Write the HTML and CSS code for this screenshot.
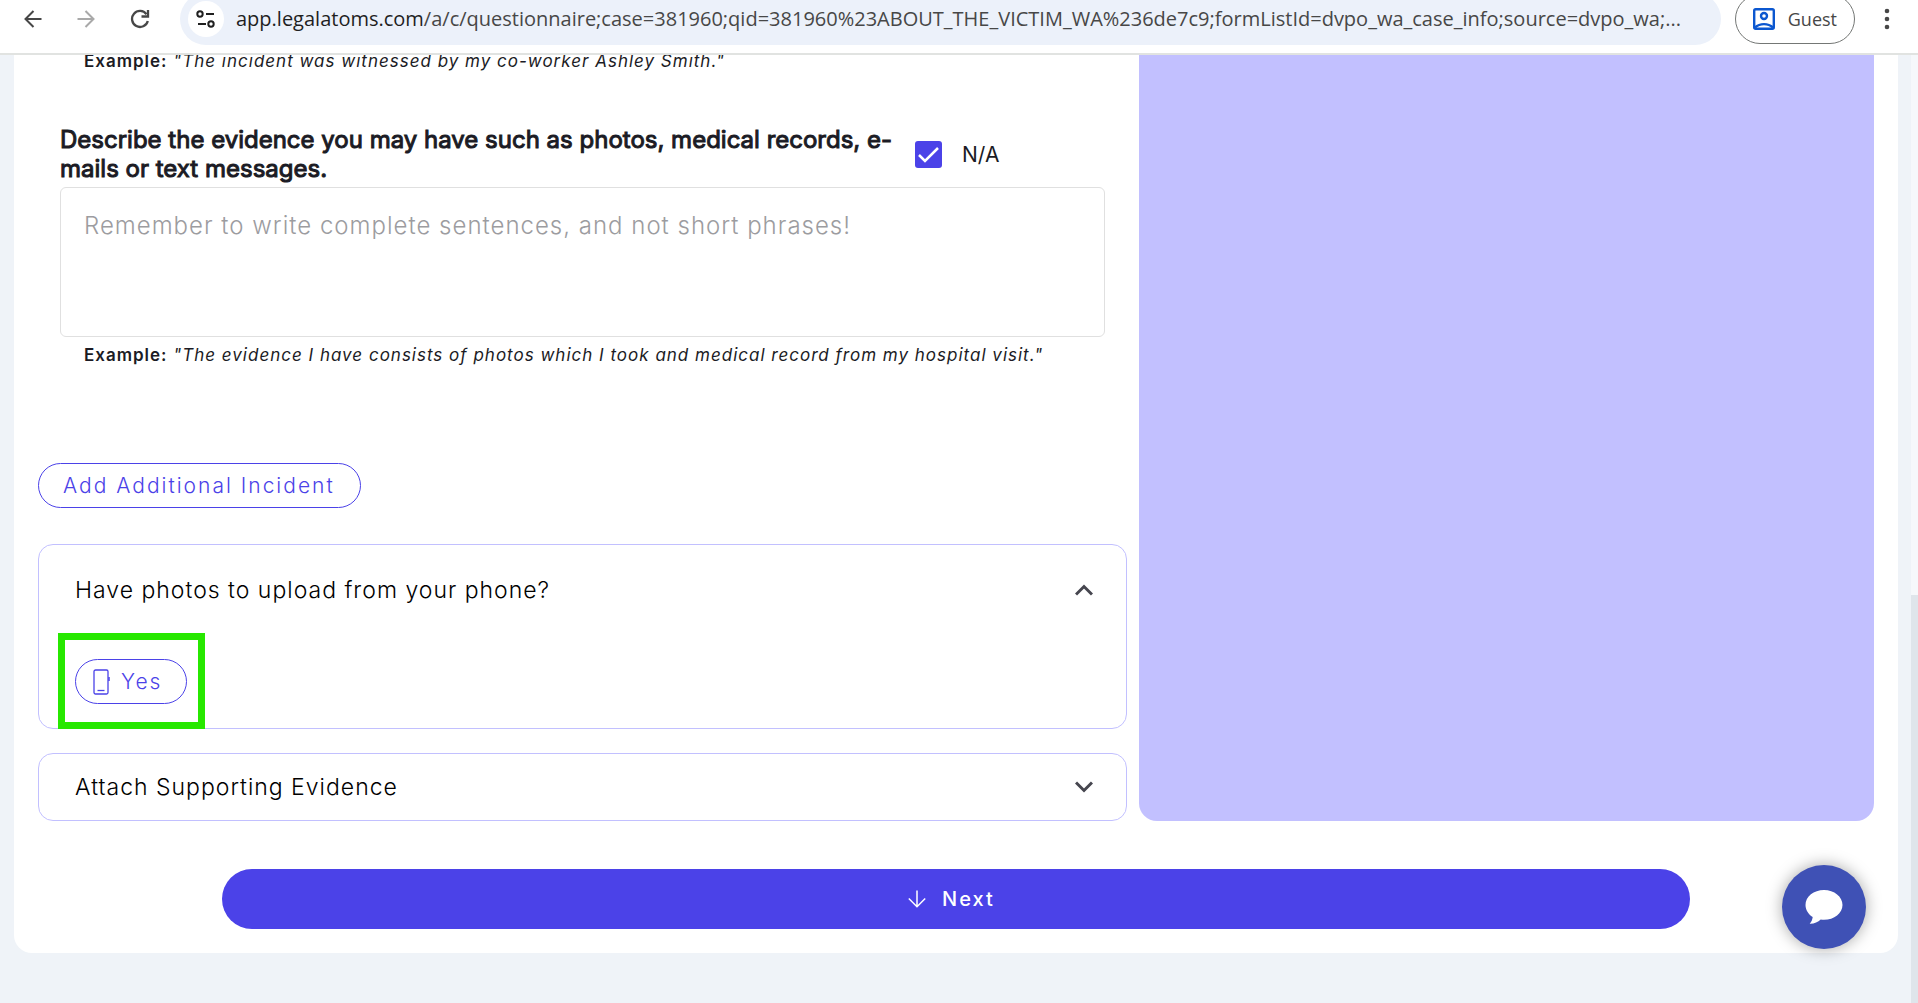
FILE: index.html
```html
<!DOCTYPE html>
<html lang="en">
<head>
<meta charset="utf-8">
<meta name="viewport" content="width=device-width, initial-scale=1">
<title>Questionnaire</title>
<link rel="stylesheet" href="styles.css">
</head>
<body>
<header class="toolbar">
  <nav class="nav">
    <button class="nav-btn" type="button" aria-label="Back"><svg width="18" height="18" viewBox="0 0 18 18" fill="none" stroke="#474747" stroke-width="2"><path d="M17.500 9H2M9.500 1L1.500 9l8 8"/></svg></button>
    <button class="nav-btn" type="button" aria-label="Forward"><svg width="18" height="18" viewBox="0 0 18 18" fill="none" stroke="#a9a9a9" stroke-width="2"><path d="M0.500 9H16M8.500 1l8 8-8 8"/></svg></button>
    <button class="nav-btn" type="button" aria-label="Reload"><svg width="20" height="20" viewBox="0 0 20 20" fill="none" stroke="#474747" stroke-width="2.300"><path d="M16.500 5.200A8 8 0 1 0 17.800 12"/><path d="M18 1v6.500h-6.500"/></svg></button>
  </nav>
  <div class="address">
    <button class="site-info" type="button" aria-label="Site information"><svg width="20" height="18" viewBox="0 0 20 18" fill="none" stroke="#1f1f1f" stroke-width="2"><circle cx="4" cy="4" r="2.700"/><path d="M10 4h8M2 14h8"/><circle cx="15" cy="14" r="2.700"/></svg></button>
    <span class="url"><span class="host">app.legalatoms.com</span>/a/c/questionnaire;case=381960;qid=381960%23ABOUT_THE_VICTIM_WA%236de7c9;formListId=dvpo_wa_case_info;source=dvpo_wa;...</span>
  </div>
  <button class="profile" type="button"><svg width="22" height="22" viewBox="0 0 22 22" fill="none" stroke="#0b57d0" stroke-width="2.400"><rect x="1.200" y="1.200" width="19.600" height="19.600" rx="1.500"/><circle cx="11" cy="8" r="3"/><path d="M2 19.500c5-4.500 13-4.500 18 0"/></svg>Guest</button>
  <button class="menu" type="button" aria-label="Menu"><svg width="6" height="22" viewBox="0 0 6 22" fill="#474747"><circle cx="3" cy="3" r="2.300"/><circle cx="3" cy="11" r="2.300"/><circle cx="3" cy="19" r="2.300"/></svg></button>
</header>
<div class="viewport">
  <main class="page">
    <div class="card">
      <div class="columns">
        <section class="form">
          <p class="example"><strong>Example:</strong> <em>"The incident was witnessed by my co-worker Ashley Smith."</em></p>
          <div class="question">
            <div class="question-head">
              <label class="question-label" for="evidence">Describe the evidence you may have such as photos, medical records, e-&#8203;mails or text messages.</label>
              <label class="na"><input class="na-box" type="checkbox" checked>N/A</label>
            </div>
            <textarea class="answer" id="evidence" placeholder="Remember to write complete sentences, and not short phrases!"></textarea>
            <p class="example"><strong>Example:</strong> <em>"The evidence I have consists of photos which I took and medical record from my hospital visit."</em></p>
          </div>
          <button class="pill add" type="button">Add Additional Incident</button>
          <div class="panel">
            <button class="panel-head" type="button" aria-expanded="true">Have photos to upload from your phone?<svg width="18" height="12" viewBox="0 0 18 12" fill="none" stroke="#46464f" stroke-width="3"><path d="M1 10.500l8-8 8 8"/></svg></button>
            <div class="panel-body">
              <button class="pill yes" type="button"><svg width="18" height="26" viewBox="0 0 18 26" fill="none" stroke="#4b42e8"><rect x="1" y="1" width="14" height="24" rx="1.500" stroke-width="1.300"/><path d="M4.500 21.500h7" stroke-width="1.300"/><path d="M16 8v4" stroke-width="1.500"/></svg>Yes</button>
              <span class="highlight"></span>
            </div>
          </div>
          <div class="panel">
            <button class="panel-head" type="button" aria-expanded="false">Attach Supporting Evidence<svg width="18" height="12" viewBox="0 0 18 12" fill="none" stroke="#46464f" stroke-width="3"><path d="M1 1.500l8 8 8-8"/></svg></button>
          </div>
        </section>
        <aside class="side"></aside>
      </div>
      <button class="next" type="button"><svg width="18" height="18" viewBox="0 0 18 18" fill="none" stroke="#fff" stroke-width="1.500"><path d="M9 0.500v16M0.800 8.500L9 16.700l8.200-8.200"/></svg>Next</button>
    </div>
  </main>
  <div class="scroll-track"><div class="scroll-thumb"></div></div>
</div>
<button class="chat" type="button" aria-label="Chat"><svg width="38" height="36" viewBox="0 0 38 36" fill="#fff"><path d="M19 1C8.800 1 0.500 7.600 0.500 16c0 5 2.800 9.300 7.200 12-.3 2.500-1.300 5-3 6.800 4.300.2 8.300-1.600 11-4.200 1.100.2 2.200.2 3.300.2 10.200 0 18.500-6.500 18.500-14.800S29.200 1 19 1z"/></svg></button>
</body>
</html>
```
FILE: styles.css
```css
* { box-sizing: border-box; }

body {
  margin: 0;
  height: 100vh;
  display: flex;
  flex-direction: column;
  overflow: hidden;
  background: #eff3f8;
  color: #1b1b24;
  font-family: Inter, "Liberation Sans", sans-serif;
}

button {
  font: inherit;
  color: inherit;
  background: none;
  border: 0;
  padding: 0;
  cursor: pointer;
}

svg { display: block; flex: none; }
p { margin: 0; }

/* Browser toolbar */
.toolbar {
  flex: none;
  display: flex;
  align-items: center;
  height: 55px;
  padding: 0 28px 16px 24px;
  overflow: hidden;
  background: #fff;
  border-bottom: 2px solid #e1e3e1;
  font-family: "Open Sans", "Noto Sans", sans-serif;
}
.nav { display: flex; gap: 35px; width: 156px; align-items: center; }
.address {
  flex: 1;
  min-width: 0;
  display: flex;
  align-items: center;
  gap: 12px;
  height: 52px;
  padding: 0 8px;
  border-radius: 26px;
  background: #ecf1fa;
}
.site-info {
  flex: none;
  display: grid;
  place-items: center;
  width: 36px;
  height: 36px;
  border-radius: 50%;
  background: #fff;
}
.url { font-size: 20px; white-space: nowrap; color: #474747; }
.host { color: #1f1f1f; }
.profile {
  flex: none;
  display: flex;
  align-items: center;
  gap: 13px;
  height: 50px;
  margin-left: 14px;
  padding: 0 17px;
  border: 1px solid #747775;
  border-radius: 25px;
  font-size: 18px;
  color: #474747;
}
.menu { margin-left: 29px; }

/* Scrolled page area */
.viewport { flex: 1; min-height: 0; display: flex; }
.page {
  flex: 1;
  min-width: 0;
  display: flex;
  flex-direction: column;
  justify-content: flex-end;
  overflow: hidden;
  padding: 0 13px 50px 14px;
}
.scroll-track {
  width: 7px;
  display: flex;
  flex-direction: column;
  justify-content: flex-end;
  background: #f6f8fb;
}
.scroll-thumb { height: 43%; background: #dfe5eb; }

.card { flex: none; padding: 24px; background: #fff; border-radius: 18px; }
.columns { display: grid; grid-template-columns: 1089fr 735fr; gap: 12px; }
.side { border-radius: 18px; background: #c2c0ff; }
.form { padding-top: 48px; }
.form > .example { margin-left: 22px; }

.example { padding-left: 24px; font-size: 17px; line-height: 22px; letter-spacing: 1px; white-space: nowrap; }
.example strong { font-weight: 600; }

.question { margin: 53px 22px 97px; }
.question-head { display: flex; align-items: center; gap: 19px; margin-bottom: 4px; }
.question-label {
  width: 80%;
  font-size: 24px;
  line-height: 29px;
  -webkit-text-stroke: 1px currentColor;
}
.na { display: flex; align-items: center; gap: 20px; font-size: 21px; }
.na-box {
  appearance: none;
  margin: 0;
  width: 27px;
  height: 27px;
  border-radius: 3px;
  background: #4b42e8 url("data:image/svg+xml,%3Csvg xmlns='http://www.w3.org/2000/svg' viewBox='0 0 27 27' fill='none' stroke='white' stroke-width='2.500'%3E%3Cpath d='M4 14l6 6L23 7'/%3E%3C/svg%3E");
}
.answer {
  display: block;
  width: 100%;
  height: 150px;
  margin-bottom: 7px;
  padding: 23px;
  border: 1px solid #e0e0e0;
  border-radius: 6px;
  resize: none;
  font: inherit;
  font-size: 24px;
  font-weight: 300;
  line-height: 30px;
  letter-spacing: 1px;
}
.answer::placeholder { color: #9c9ca0; opacity: 1; }

.pill {
  display: flex;
  align-items: center;
  height: 45px;
  border: 1px solid #4b42e8;
  border-radius: 23px;
  color: #4b42e8;
  font-size: 21px;
  font-weight: 300;
  letter-spacing: 2px;
}
.add { padding: 0 25px 0 24px; margin-bottom: 36px; }
.yes { gap: 10px; padding: 0 24px 0 17px; }

.panel { border: 1px solid #c2c0ff; border-radius: 15px; }
.panel + .panel { margin-top: 24px; }
.panel-head {
  display: flex;
  align-items: center;
  justify-content: space-between;
  width: 100%;
  height: 66px;
  padding: 0 33px 0 36px;
  color: #000;
  font-size: 23px;
  font-weight: 300;
  letter-spacing: 1px;
  text-align: left;
}
.panel-head[aria-expanded="true"] { height: 90px; }
.panel-body { position: relative; width: max-content; margin: 24px 36px; }
/* Green frame that points out the Yes button */
.highlight {
  position: absolute;
  inset: -26px -18px -25px -17px;
  border: 7px solid #27e800;
  pointer-events: none;
}

.next {
  display: flex;
  align-items: center;
  justify-content: center;
  gap: 16px;
  width: 80%;
  height: 60px;
  margin: 48px auto 0;
  padding-right: 9px;
  border-radius: 30px;
  background: #4b42e8;
  color: #fff;
  font-size: 20px;
  font-weight: 500;
  letter-spacing: 2px;
}

.chat {
  position: fixed;
  right: 52px;
  bottom: 54px;
  display: grid;
  place-items: center;
  width: 84px;
  height: 84px;
  border-radius: 50%;
  background: #3f51b5;
  box-shadow: 0 0 16px rgba(0, 0, 0, 0.35);
}
```
